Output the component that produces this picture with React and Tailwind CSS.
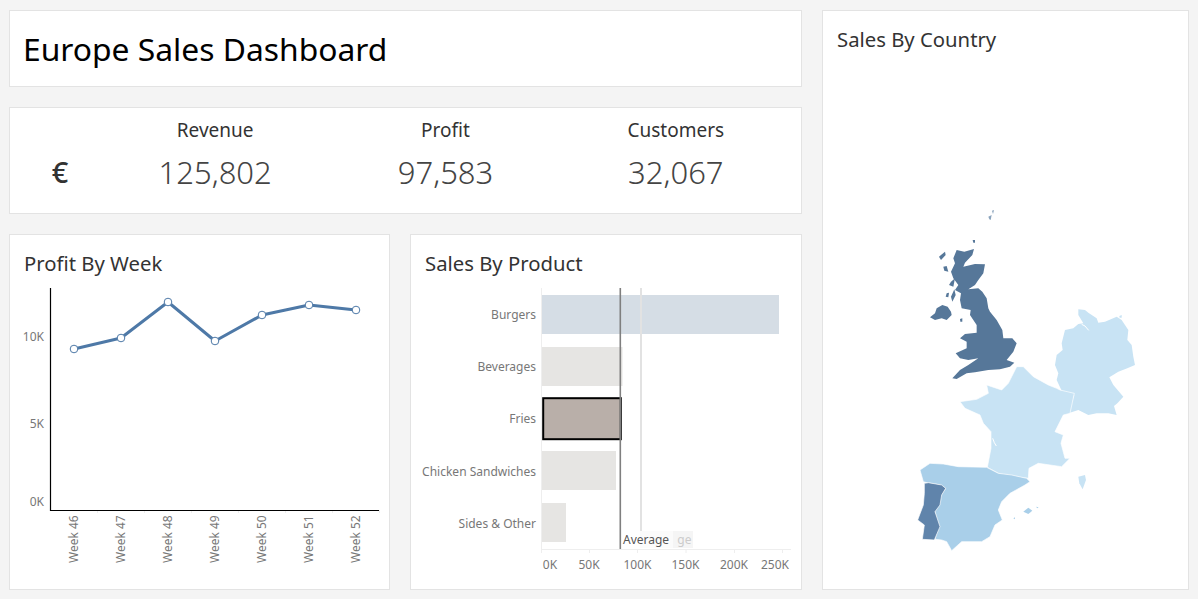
const FONT = "font-['Noto_Sans',sans-serif]";

const KPIS = [
  { label: 'Revenue', value: '125,802' },
  { label: 'Profit', value: '97,583' },
  { label: 'Customers', value: '32,067' },
];

const WEEKS = [
  { name: 'Week 46', x: 74, y: 349 },
  { name: 'Week 47', x: 121, y: 338 },
  { name: 'Week 48', x: 168, y: 302 },
  { name: 'Week 49', x: 215, y: 341 },
  { name: 'Week 50', x: 262, y: 315 },
  { name: 'Week 51', x: 309, y: 305 },
  { name: 'Week 52', x: 356, y: 310 },
];

const PRODUCTS = [
  { name: 'Burgers', y: 295, h: 39, w: 237, fill: '#d5dde5', label: 319 },
  { name: 'Beverages', y: 347, h: 39, w: 80.5, fill: '#e6e5e3', label: 371 },
  { name: 'Fries', x: 543.2, y: 398.2, h: 41, w: 77.6, fill: '#b9afa9', label: 423, selected: true },
  { name: 'Chicken Sandwiches', y: 451, h: 39, w: 74, fill: '#e6e5e3', label: 476 },
  { name: 'Sides & Other', y: 503, h: 39, w: 24, fill: '#e6e5e3', label: 528 },
];

const TICKS = [
  { t: '0K', x: 550, m: 541.5 },
  { t: '50K', x: 589, m: 589.5 },
  { t: '100K', x: 637.5, m: 637.5 },
  { t: '150K', x: 685.5, m: 686 },
  { t: '200K', x: 734, m: 734.5 },
  { t: '250K', x: 775, m: 782.5 },
];

function Card({ className, children }) {
  return <div className={`bg-white border border-[#e3e3e3] ${className}`}>{children}</div>;
}

function ProfitChart() {
  const line = WEEKS.map((w) => `${w.x},${w.y}`).join(' ');
  return (
    <svg viewBox="10 235 379 354" className="absolute inset-0 w-full h-full" fontFamily="Noto Sans, sans-serif">
      {[['10K', 341], ['5K', 428], ['0K', 506]].map(([t, y]) => (
        <text key={t} x="44" y={y} textAnchor="end" fontSize="12" fill="#777">{t}</text>
      ))}
      {WEEKS.map((w) => (
        <path key={w.x} d={`M${w.x + 23.5} 510V513`} stroke="#eee" />
      ))}
      <path d="M50.5 288V510.5H379" fill="none" stroke="#000" strokeWidth="1.2" />
      <polyline points={line} fill="none" stroke="#4e79a7" strokeWidth="3" strokeLinejoin="round" />
      {WEEKS.map((w) => (
        <g key={w.name}>
          <circle cx={w.x} cy={w.y} r="3.8" fill="#fff" stroke="#4e79a7" strokeWidth="1" />
          <text transform={`translate(${w.x + 4} 563) rotate(-90)`} fontSize="12" fill="#777">{w.name}</text>
        </g>
      ))}
    </svg>
  );
}

function ProductChart() {
  return (
    <svg viewBox="411 235 390 354" className="absolute inset-0 w-full h-full" fontFamily="Noto Sans, sans-serif">
      <path d="M541.5 288V549" stroke="#eee" />
      <path d="M542 549.5H791" stroke="#eee" />
      {TICKS.map((k) => (
        <g key={k.t}>
          <path d={`M${k.m} 549V553`} stroke="#eee" />
          <text x={k.x} y="569" textAnchor="middle" fontSize="12" fill="#777">{k.t}</text>
        </g>
      ))}
      {PRODUCTS.map((p) => (
        <g key={p.name}>
          <text x="536" y={p.label} textAnchor="end" fontSize="12" fill="#777">{p.name}</text>
          <rect x={p.x || 542} y={p.y} width={p.w} height={p.h} fill={p.fill} stroke={p.selected ? '#000' : 'none'} strokeWidth={p.selected ? 2 : 0} />
        </g>
      ))}
      <path d="M641 288V531" stroke="#e2e2e2" strokeWidth="2" />
      <path d="M620.3 288V549" stroke="#7f7f7f" strokeWidth="1.6" />
      <rect x="640" y="531" width="33" height="17" fill="#fbfbfb" />
      <rect x="673" y="531" width="20" height="17" fill="#f5f5f5" />
      <text x="691.5" y="544" textAnchor="end" fontSize="12" fill="#ccc">ge</text>
      <text x="623" y="544" fontSize="12" fill="#555">Average</text>
    </svg>
  );
}

function EuropeMap() {
  return (
    <svg viewBox="823 11 365 578" className="absolute inset-0 w-full h-full">
      <g transform="translate(1040 300) scale(0.3333)">
        <polygon fill="#c8e3f4" points="115,28 135,30 145,38 170,55 175,68 195,65 230,50 245,60 265,90 262,120 275,135 280,170 285,195 262,205 235,215 208,232 220,255 250,290 232,310 222,318 230,345 205,340 170,340 145,345 115,330 85,340 103,285 65,272 50,240 55,220 45,195 50,165 68,150 65,130 75,90 100,85 115,72 130,70 115,45" />
        <polyline fill="none" stroke="#fff" strokeWidth="3" points="125,73 135,78 146,91" />
        <polygon fill="#c8e3f4" points="238,48 245,45 245,53 239,53" />
      </g>
      <g transform="translate(955 360) scale(0.3333)">
        <polygon fill="#c8e3f4" stroke="#fff" strokeWidth="2" points="15,125 65,118 100,100 95,75 140,90 160,70 185,20 205,20 235,50 280,75 305,85 315,90 358,100 345,160 325,165 300,215 325,225 318,250 330,295 345,295 320,320 285,315 250,310 222,325 220,355 175,350 130,340 97,322 108,265 108,215 85,190 75,165 30,145" />
        <polyline fill="none" stroke="#fff" strokeWidth="3" points="113,235 118,248 124,258" />
      </g>
      <g transform="translate(915 460) scale(0.3333)">
        <polygon fill="#a9cfe9" stroke="#fff" strokeWidth="2" points="15,30 45,10 85,12 130,20 215,22 250,40 290,45 335,55 345,65 330,75 285,100 260,125 250,150 262,180 240,195 225,230 200,245 140,245 110,272 95,245 80,240 60,238 70,200 60,155 75,110 92,85 75,75 35,68 25,65" />
        <polygon fill="#6084ab" stroke="#fff" strokeWidth="2" points="28,70 40,68 80,75 92,85 80,105 75,135 60,155 75,200 58,240 22,238 28,195 8,180 25,135 28,100" />
        <polygon fill="#a9cfe9" points="325,155 340,143 352,152 340,162" />
        <polygon fill="#a9cfe9" points="295,175 300,172 300,178" />
        <polygon fill="#a9cfe9" points="363,140 371,142 367,145" />
      </g>
      <g transform="translate(900 380) scale(0.3333)">
        <polygon fill="#c8e3f4" points="535,290 555,285 558,300 548,328 538,310" />
      </g>
      <g transform="translate(925 240) scale(0.3333)" fill="#567799">
        <polygon points="95,30 118,35 147,27 142,45 120,68 115,80 150,72 180,73 175,100 160,120 150,135 130,148 160,145 172,155 185,175 190,205 195,215 215,240 232,270 235,295 262,295 275,310 265,335 245,360 268,368 255,380 225,388 190,390 150,397 125,400 95,417 82,415 105,390 130,375 160,355 130,360 105,355 92,340 125,325 125,305 105,295 120,282 155,278 155,255 135,225 137,210 110,205 105,180 108,160 90,150 100,135 85,115 78,95 90,70 85,55" />
        <polygon points="15,232 30,220 35,205 52,195 68,200 78,215 80,225 65,240 50,235 30,240" />
        <polygon points="42,50 60,35 62,45 48,60" />
        <polygon points="55,80 65,78 70,95 58,92" />
        <polygon points="78,125 90,115 85,140 72,135" />
        <polygon points="65,160 72,158 70,172 62,170" />
        <polygon points="78,170 88,148 92,165 82,185" />
        <polygon points="105,237 112,235 112,245 106,245" />
        <polygon points="143,0 150,0 150,8 145,8" />
      </g>
      <g transform="translate(900 200) scale(0.3333)" fill="#8aa3bc">
        <polygon points="265,50 275,45 272,60 268,58" />
        <polygon points="276,32 282,30 279,42" />
      </g>
    </svg>
  );
}

export default function App() {
  return (
    <div className={`w-[1198px] h-[599px] bg-[#f4f4f4] pl-[9px] pt-[10px] flex gap-[20px] overflow-hidden text-[#333] ${FONT}`}>
      <div className="w-[793px] flex flex-col gap-[20px]">
        <Card className="h-[77px] flex items-center pl-[13px]">
          <h1 className="text-[31.8px] text-black font-normal leading-none">Europe Sales Dashboard</h1>
        </Card>

        <Card className="h-[107px] grid grid-cols-[90px_1fr_1fr_1fr] pr-[10px]">
          <div className="flex items-end justify-center pb-[27px] pl-[10px] text-[29px] leading-none font-medium">€</div>
          {KPIS.map((k) => (
            <div key={k.label} className="flex flex-col items-center pt-[10px]">
              <div className="text-[19px] leading-[24px]">{k.label}</div>
              <div className="text-[31px] leading-[40px] mt-[10px] text-[#444] font-light">{k.value}</div>
            </div>
          ))}
        </Card>

        <div className="flex gap-[20px]">
          <Card className="relative w-[381px] h-[356px] pl-[14px] pt-[14px]">
            <ProfitChart />
            <h2 className="relative text-[20.3px] leading-[28px] font-normal">Profit By Week</h2>
          </Card>
          <Card className="relative w-[392px] h-[356px] pl-[14px] pt-[14px]">
            <ProductChart />
            <h2 className="relative text-[20.3px] leading-[28px] font-normal">Sales By Product</h2>
          </Card>
        </div>
      </div>

      <Card className="relative w-[367px] h-[580px] pl-[14px] pt-[14px]">
        <EuropeMap />
        <h2 className="relative text-[20.3px] leading-[28px] font-normal">Sales By Country</h2>
      </Card>
    </div>
  );
}
